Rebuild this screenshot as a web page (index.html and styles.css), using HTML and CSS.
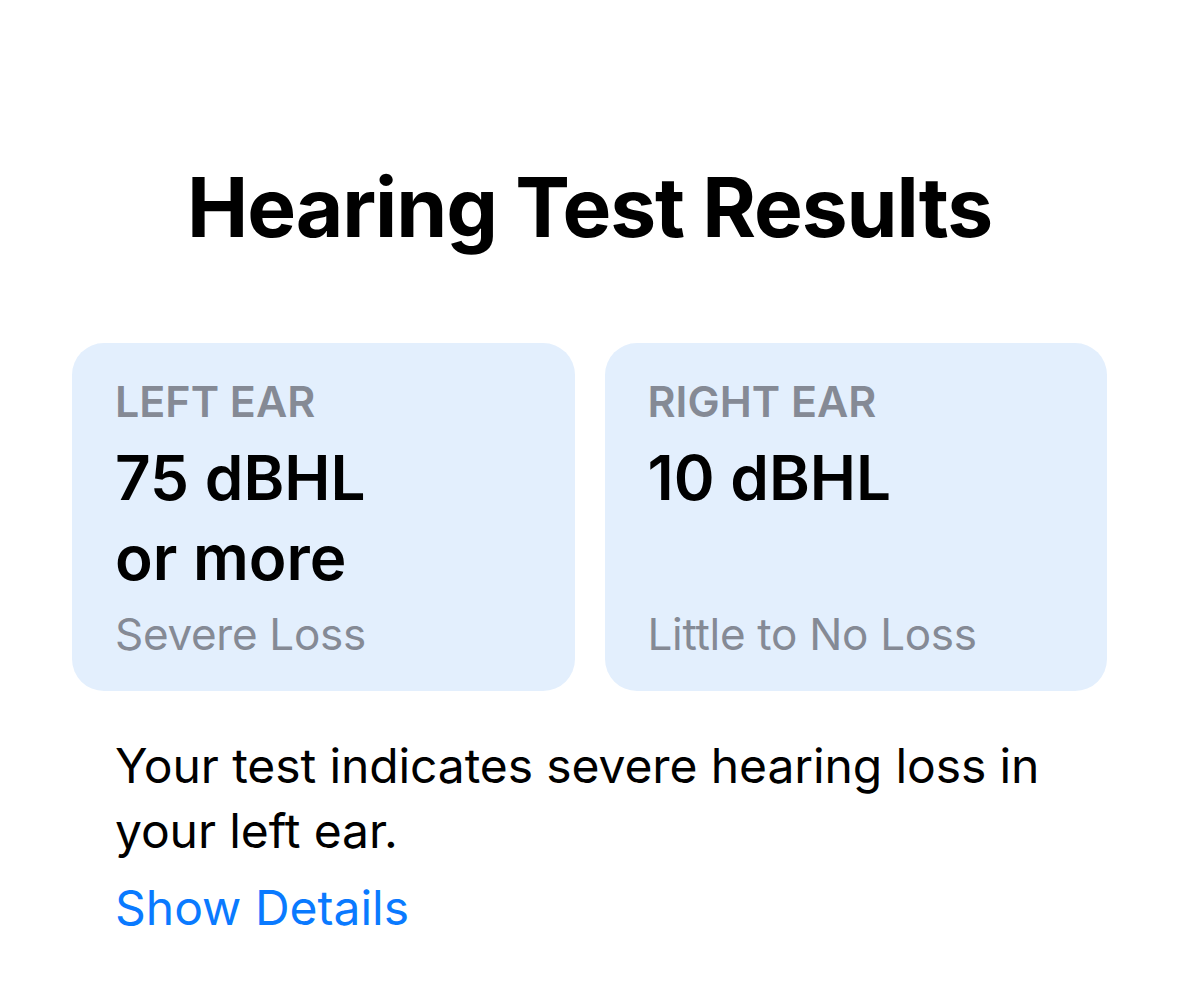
FILE: index.html
```html
<!DOCTYPE html>
<html lang="en">
<head>
<meta charset="utf-8">
<title>Hearing Test Results</title>
<link rel="stylesheet" href="styles.css">
</head>
<body>
<main class="page">
  <h1 class="title">Hearing Test Results</h1>
  <section class="cards">
    <div class="card">
      <div class="card-label">LEFT EAR</div>
      <div class="card-value">75 dBHL<br>or more</div>
      <div class="card-note">Severe Loss</div>
    </div>
    <div class="card">
      <div class="card-label">RIGHT EAR</div>
      <div class="card-value">10 dBHL</div>
      <div class="card-note">Little to No Loss</div>
    </div>
  </section>
  <p class="summary">Your test indicates severe hearing loss in your left ear.</p>
  <a class="details-link" href="#">Show Details</a>
</main>
</body>
</html>
```

FILE: styles.css
```css
html, body {
  margin: 0;
  padding: 0;
  background: #ffffff;
}

body {
  font-family: Inter, "Noto Sans", "Liberation Sans", sans-serif;
  color: #000000;
}

.page {
  display: flex;
  flex-direction: column;
  padding: 158px 72px 0;
}

.title {
  margin: 0;
  text-align: center;
  font-size: 82px;
  line-height: 100px;
  font-weight: 700;
  letter-spacing: -1.1px;
}

.cards {
  margin-top: 85px;
  display: flex;
  gap: 30px;
}

.card {
  flex: 1;
  display: flex;
  flex-direction: column;
  background: #e3effd;
  border-radius: 32px;
  padding: 32px 43px 30px;
}

.card-label {
  font-size: 43px;
  line-height: 52px;
  font-weight: 600;
  color: #858a95;
}

.card-value {
  margin-top: 11px;
  font-size: 62px;
  line-height: 80px;
  font-weight: 600;
}

.card-note {
  margin-top: auto;
  padding-top: 10px;
  font-size: 44px;
  line-height: 53px;
  font-weight: 400;
  color: #858a95;
  letter-spacing: -0.3px;
}

.summary {
  margin: 42px 0 0;
  padding: 0 43px;
  font-size: 48px;
  line-height: 65px;
  font-weight: 400;
  letter-spacing: -0.1px;
}

.details-link {
  align-self: flex-start;
  margin: 12px 0 0 43px;
  font-size: 48px;
  line-height: 65px;
  color: #0a7aff;
  text-decoration: none;
}
```
